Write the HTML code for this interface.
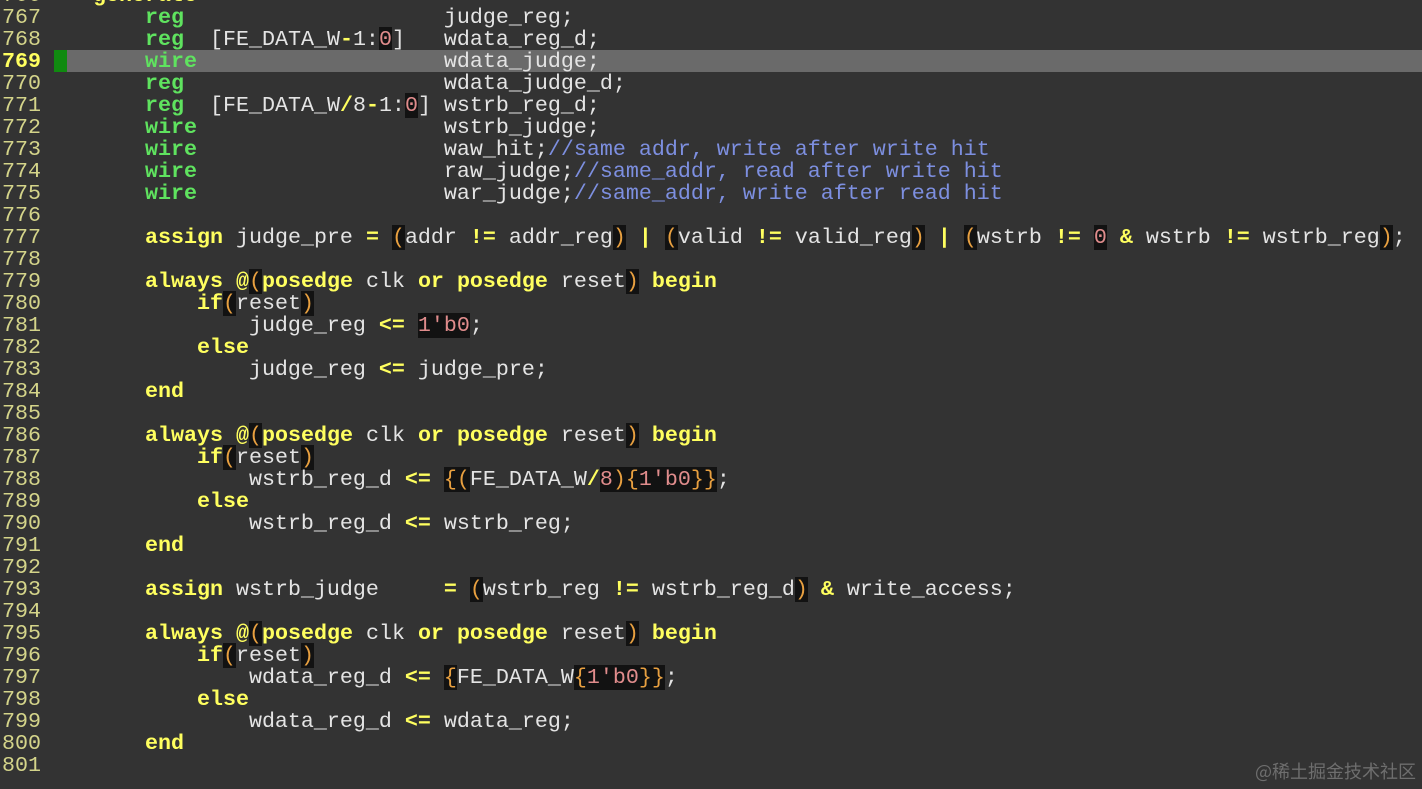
<!DOCTYPE html>
<html><head><meta charset="utf-8"><style>
html,body{margin:0;padding:0;background:#333333;width:1422px;height:789px;overflow:hidden}
.l{position:absolute;left:0;height:22px;width:1422px;font-family:"Liberation Mono",monospace;font-size:21.67px;line-height:23px;white-space:pre;color:#e4e4e4}
.n{position:absolute;left:2px;color:#d4d48a;}
.t{position:absolute;left:67px;}
.cl{background:#6a6a6a}
.g{color:#5fe35f;font-weight:bold}
.y{color:#ffff5f;font-weight:bold}
.o{color:#ffff5f;font-weight:bold}
.c{color:#7d8fe0}
.p{color:#e8a040;background:#121212}
.k{background:#121212}
.d{color:#e08c8c}
.pd{color:#e08c8c;background:#121212}
.wm{position:absolute;left:1255px;top:758px;font-family:"Noto Sans CJK SC",sans-serif;font-size:18px;color:#6e6e6e}
</style></head><body>
<div class="l" style="top:-16px"><span class="n">766</span><span class="t">  <span class="y">generate</span></span></div>
<div class="l" style="top:6px"><span class="n">767</span><span class="t">      <span class="g">reg</span>                    judge_reg;</span></div>
<div class="l" style="top:28px"><span class="n">768</span><span class="t">      <span class="g">reg</span>  [FE_DATA_W<span class="o">-</span>1:<span class="pd">0</span>]   wdata_reg_d;</span></div>
<div class="l" style="top:50px"><span class="n" style="color:#ffff5f;font-weight:bold">769</span><span style="position:absolute;left:54px;width:13px;height:22px;background:#108a10"></span><span class="t cl" style="width:1355px;height:22px">      <span class="g">wire</span>                   wdata_judge;</span></div>
<div class="l" style="top:72px"><span class="n">770</span><span class="t">      <span class="g">reg</span>                    wdata_judge_d;</span></div>
<div class="l" style="top:94px"><span class="n">771</span><span class="t">      <span class="g">reg</span>  [FE_DATA_W<span class="o">/</span>8<span class="o">-</span>1:<span class="pd">0</span>] wstrb_reg_d;</span></div>
<div class="l" style="top:116px"><span class="n">772</span><span class="t">      <span class="g">wire</span>                   wstrb_judge;</span></div>
<div class="l" style="top:138px"><span class="n">773</span><span class="t">      <span class="g">wire</span>                   waw_hit;<span class="c">//same addr, write after write hit</span></span></div>
<div class="l" style="top:160px"><span class="n">774</span><span class="t">      <span class="g">wire</span>                   raw_judge;<span class="c">//same_addr, read after write hit</span></span></div>
<div class="l" style="top:182px"><span class="n">775</span><span class="t">      <span class="g">wire</span>                   war_judge;<span class="c">//same_addr, write after read hit</span></span></div>
<div class="l" style="top:204px"><span class="n">776</span></div>
<div class="l" style="top:226px"><span class="n">777</span><span class="t">      <span class="y">assign</span> judge_pre <span class="o">=</span> <span class="p">(</span>addr <span class="o">!=</span> addr_reg<span class="p">)</span> <span class="o">|</span> <span class="p">(</span>valid <span class="o">!=</span> valid_reg<span class="p">)</span> <span class="o">|</span> <span class="p">(</span>wstrb <span class="o">!=</span> <span class="pd">0</span> <span class="o">&amp;</span> wstrb <span class="o">!=</span> wstrb_reg<span class="p">)</span>;</span></div>
<div class="l" style="top:248px"><span class="n">778</span></div>
<div class="l" style="top:270px"><span class="n">779</span><span class="t">      <span class="y">always</span> <span class="o">@</span><span class="p">(</span><span class="y">posedge</span> clk <span class="y">or</span> <span class="y">posedge</span> reset<span class="p">)</span> <span class="y">begin</span></span></div>
<div class="l" style="top:292px"><span class="n">780</span><span class="t">          <span class="y">if</span><span class="p">(</span>reset<span class="p">)</span></span></div>
<div class="l" style="top:314px"><span class="n">781</span><span class="t">              judge_reg <span class="o">&lt;=</span> <span class="pd">1'b0</span>;</span></div>
<div class="l" style="top:336px"><span class="n">782</span><span class="t">          <span class="y">else</span></span></div>
<div class="l" style="top:358px"><span class="n">783</span><span class="t">              judge_reg <span class="o">&lt;=</span> judge_pre;</span></div>
<div class="l" style="top:380px"><span class="n">784</span><span class="t">      <span class="y">end</span></span></div>
<div class="l" style="top:402px"><span class="n">785</span></div>
<div class="l" style="top:424px"><span class="n">786</span><span class="t">      <span class="y">always</span> <span class="o">@</span><span class="p">(</span><span class="y">posedge</span> clk <span class="y">or</span> <span class="y">posedge</span> reset<span class="p">)</span> <span class="y">begin</span></span></div>
<div class="l" style="top:446px"><span class="n">787</span><span class="t">          <span class="y">if</span><span class="p">(</span>reset<span class="p">)</span></span></div>
<div class="l" style="top:468px"><span class="n">788</span><span class="t">              wstrb_reg_d <span class="o">&lt;=</span> <span class="p">{(</span>FE_DATA_W<span class="o">/</span><span class="pd">8</span><span class="p">){</span><span class="pd">1'b0</span><span class="p">}}</span>;</span></div>
<div class="l" style="top:490px"><span class="n">789</span><span class="t">          <span class="y">else</span></span></div>
<div class="l" style="top:512px"><span class="n">790</span><span class="t">              wstrb_reg_d <span class="o">&lt;=</span> wstrb_reg;</span></div>
<div class="l" style="top:534px"><span class="n">791</span><span class="t">      <span class="y">end</span></span></div>
<div class="l" style="top:556px"><span class="n">792</span></div>
<div class="l" style="top:578px"><span class="n">793</span><span class="t">      <span class="y">assign</span> wstrb_judge     <span class="o">=</span> <span class="p">(</span>wstrb_reg <span class="o">!=</span> wstrb_reg_d<span class="p">)</span> <span class="o">&amp;</span> write_access;</span></div>
<div class="l" style="top:600px"><span class="n">794</span></div>
<div class="l" style="top:622px"><span class="n">795</span><span class="t">      <span class="y">always</span> <span class="o">@</span><span class="p">(</span><span class="y">posedge</span> clk <span class="y">or</span> <span class="y">posedge</span> reset<span class="p">)</span> <span class="y">begin</span></span></div>
<div class="l" style="top:644px"><span class="n">796</span><span class="t">          <span class="y">if</span><span class="p">(</span>reset<span class="p">)</span></span></div>
<div class="l" style="top:666px"><span class="n">797</span><span class="t">              wdata_reg_d <span class="o">&lt;=</span> <span class="p">{</span>FE_DATA_W<span class="p">{</span><span class="pd">1'b0</span><span class="p">}}</span>;</span></div>
<div class="l" style="top:688px"><span class="n">798</span><span class="t">          <span class="y">else</span></span></div>
<div class="l" style="top:710px"><span class="n">799</span><span class="t">              wdata_reg_d <span class="o">&lt;=</span> wdata_reg;</span></div>
<div class="l" style="top:732px"><span class="n">800</span><span class="t">      <span class="y">end</span></span></div>
<div class="l" style="top:754px"><span class="n">801</span></div>
<div class="wm">@稀土掘金技术社区</div>
</body></html>
